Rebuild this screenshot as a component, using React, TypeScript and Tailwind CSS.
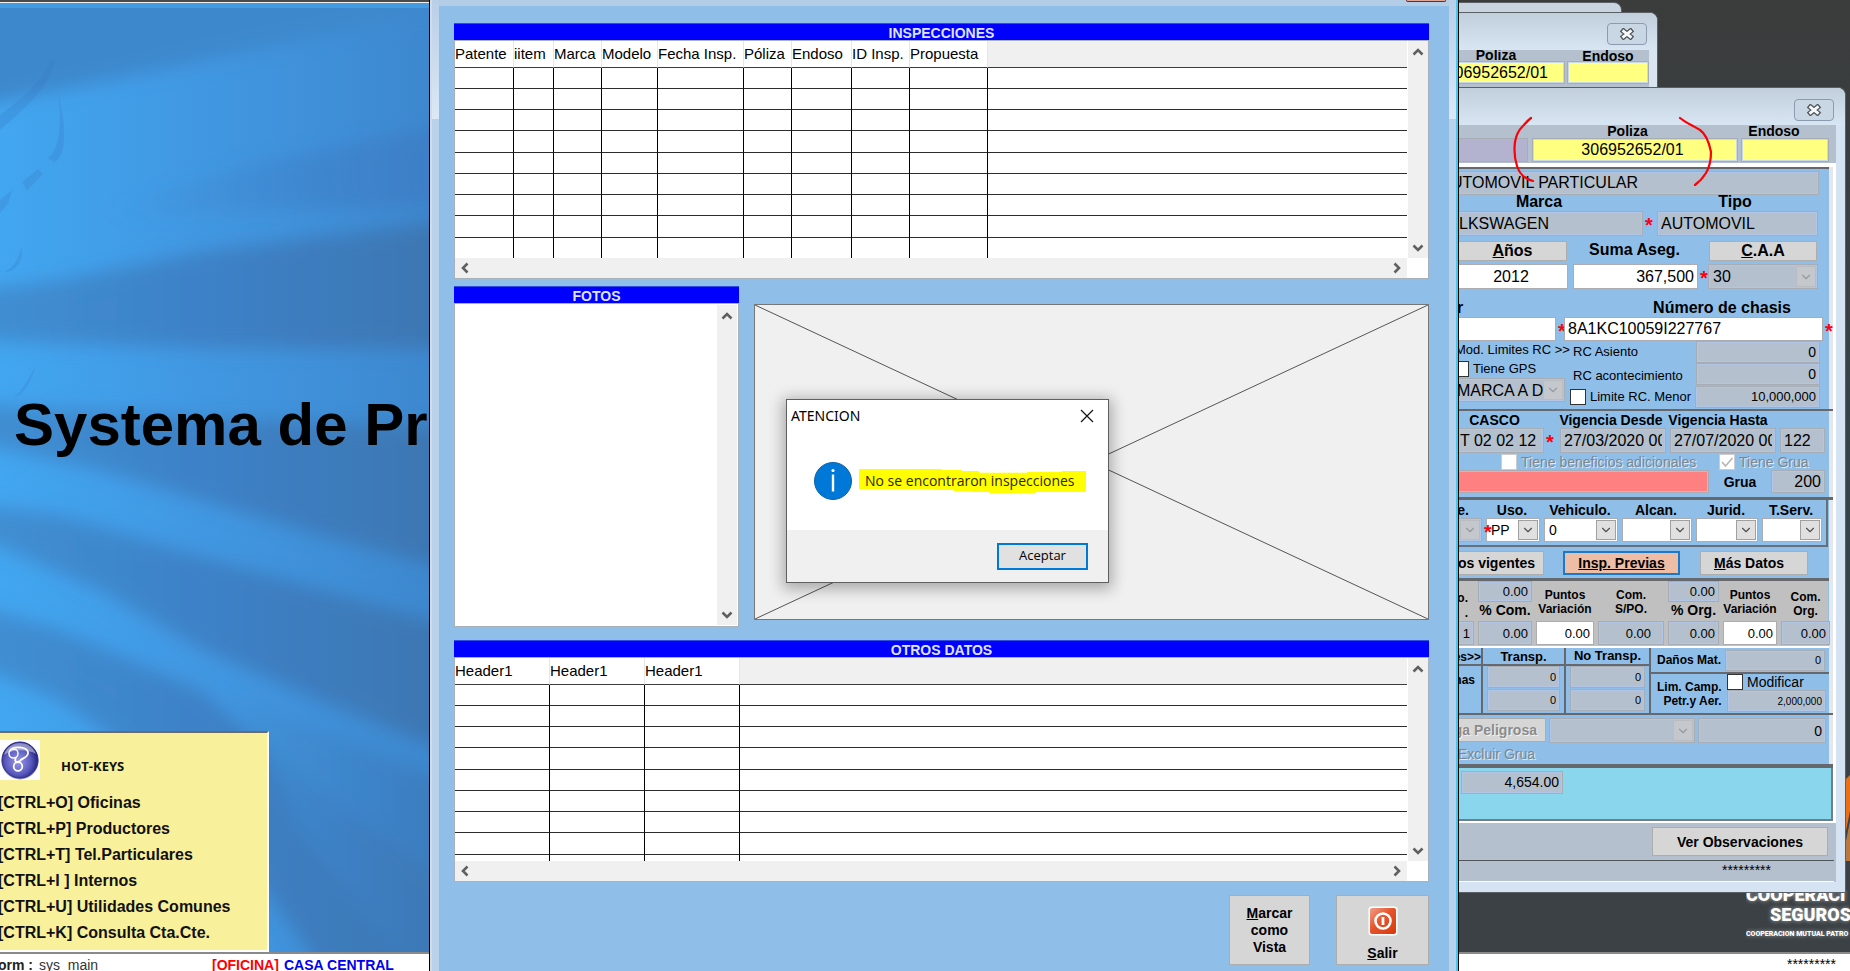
import React from "react";
import { ChevronDown } from "lucide-react";

type Kids = { children?: React.ReactNode };

/* ---------- Shared controls ---------- */

const fieldTones = {
  gray: "border-[#a7adb6] bg-[#b4c0ce] shadow-[inset_0_0_0_1px_#b3c5e4]",
  white: "border-[#abadb3] bg-white",
  yellow: "border-[#a7adb6] bg-[#ffff80] shadow-[inset_0_0_0_1px_#c9d9e8]",
  lilac: "border-[#a7adb6] bg-[#b3b3cf]",
  red: "border-[#a7adb6] bg-[#ff8080] shadow-[inset_0_0_0_1px_#c0b8d8]",
};

function Field({
  label,
  value = "",
  className,
  tone = "gray",
  id,
}: {
  label?: string;
  value?: string;
  className: string;
  tone?: keyof typeof fieldTones;
  id?: string;
}) {
  return (
    <input
      id={id}
      aria-label={label}
      readOnly
      defaultValue={value}
      className={`min-w-0 shrink-0 border px-[3px] outline-none ${fieldTones[tone]} ${className}`}
    />
  );
}

function Combo({
  label,
  value = "",
  className,
  disabled = false,
}: {
  label: string;
  value?: string;
  className: string;
  disabled?: boolean;
}) {
  return (
    <div
      className={`relative flex shrink-0 border ${
        disabled ? "border-[#a7adb6] bg-[#b4c0ce] shadow-[inset_0_0_0_1px_#b3c5e4]" : "border-[#abadb3] bg-white"
      } ${className}`}
    >
      <select
        aria-label={label}
        disabled={disabled}
        defaultValue={value}
        className="h-full w-full appearance-none bg-transparent pl-1 text-black opacity-100 outline-none"
      >
        <option value={value}>{value}</option>
      </select>
      <span
        className={`pointer-events-none absolute inset-y-px right-px flex w-5 items-center justify-center border ${
          disabled
            ? "border-[#b9bdc2] bg-[#c4c8cc] text-[#969a9e]"
            : "border-[#a0a0a0] bg-[#e0e0e0] text-[#505050]"
        }`}
      >
        <ChevronDown size={14} strokeWidth={2} />
      </span>
    </div>
  );
}

function Star({ className = "" }: { className?: string }) {
  return (
    <span className={`w-3 shrink-0 pt-1 text-center text-xl leading-none font-bold text-[#ff0010] ${className}`}>
      *
    </span>
  );
}

function Button({
  children,
  className = "",
  active = false,
  ...rest
}: Kids & { active?: boolean } & React.ButtonHTMLAttributes<HTMLButtonElement>) {
  return (
    <button
      type="button"
      className={`shrink-0 font-bold ${
        active ? "border-2 border-[#1e78c8] bg-[#edbda6]" : "border border-[#adadad] bg-[#d6d6d6]"
      } ${className}`}
      {...rest}
    >
      {children}
    </button>
  );
}

function Check({
  id,
  label,
  className = "",
  faded = false,
  checked = false,
}: {
  id: string;
  label: string;
  className?: string;
  faded?: boolean;
  checked?: boolean;
}) {
  return (
    <span className={`flex shrink-0 items-center gap-1 whitespace-nowrap ${className}`}>
      <span className="relative flex">
        <input
          id={id}
          type="checkbox"
          disabled={faded}
          defaultChecked={checked}
          className={`size-4 appearance-none border bg-white ${faded ? "border-[#cccccc]" : "border-[#333333]"}`}
        />
        {checked && (
          <svg viewBox="0 0 16 16" className="pointer-events-none absolute inset-0 size-4">
            <path d="M3 8l3.5 4L13.5 4" fill="none" stroke="#b8b8b8" strokeWidth="1.8" />
          </svg>
        )}
      </span>
      <label
        htmlFor={id}
        className={faded ? "text-[#7d8790] [text-shadow:1px_1px_0_#ffffffb0]" : "text-black"}
      >
        {label}
      </label>
    </span>
  );
}

function Arrow({ dir }: { dir: "up" | "down" | "left" | "right" }) {
  const d = {
    up: "M1.5 8.5L6 4l4.500 4.500",
    down: "M1.500 3.500L6 8l4.500-4.500",
    left: "M8.500 1.500L4 6l4.500 4.500",
    right: "M3.500 1.500L8 6l-4.500 4.500",
  }[dir];
  return (
    <svg viewBox="0 0 12 12" className="size-3">
      <path d={d} fill="none" stroke="#606060" strokeWidth="2.6" />
    </svg>
  );
}

function VScroll() {
  return (
    <div className="flex w-5 shrink-0 flex-col justify-between bg-[#f0f0f0]">
      <button type="button" aria-label="Subir" className="flex h-[22px] items-center justify-center">
        <Arrow dir="up" />
      </button>
      <button type="button" aria-label="Bajar" className="flex h-5 items-center justify-center">
        <Arrow dir="down" />
      </button>
    </div>
  );
}

function HScroll() {
  return (
    <div className="mr-[21px] flex h-5 justify-between bg-[#f0f0f0]">
      <button type="button" aria-label="Izquierda" className="flex w-5 items-center justify-center">
        <Arrow dir="left" />
      </button>
      <button type="button" aria-label="Derecha" className="flex w-5 items-center justify-center">
        <Arrow dir="right" />
      </button>
    </div>
  );
}

function CloseBox() {
  return (
    <button
      type="button"
      aria-label="Cerrar"
      className="flex h-[22px] w-10 items-center justify-center rounded-sm border border-[#8d9bb0] bg-[#c9d6e4]"
    >
      <svg viewBox="0 0 16 12" className="h-3 w-4">
        <path d="M2.500 1.500l11 9M13.500 1.500l-11 9" stroke="#50555c" strokeWidth="5.400" />
        <path d="M3.500 2.300l9 7.400M12.500 2.300l-9 7.400" stroke="#f6f8fa" strokeWidth="2.800" />
      </svg>
    </button>
  );
}

/* ---------- Main window ---------- */

function Caption({ children }: Kids) {
  return (
    <h2 className="h-[17px] border-t border-[#2d4fe0] bg-[#0000ff] text-center text-sm leading-[18px] font-bold text-[#dfe3ff]">
      {children}
    </h2>
  );
}

function Grid({
  columns,
  rows,
  lastRow,
}: {
  columns: { name: string; width: string }[];
  rows: number;
  lastRow: string;
}) {
  return (
    <div className="border border-[#a9b2ba] bg-white">
      <div className="flex">
        <table className="min-w-0 flex-1 table-fixed border-separate border-spacing-0 text-[15px]">
          <thead>
            <tr className="h-[27px]">
              {columns.map((c, i) => (
                <th
                  key={i}
                  className={`border-r border-b border-r-[#e6e6e6] border-b-[#3c3c3c] p-0 text-left font-normal whitespace-nowrap ${c.width}`}
                >
                  {c.name}
                </th>
              ))}
              <th className="border-b border-b-[#3c3c3c] bg-[#f0f0f0] p-0" />
            </tr>
          </thead>
          <tbody>
            {Array.from({ length: rows }, (_, r) => (
              <tr key={r} className={r === rows - 1 ? lastRow : r % 4 === 3 ? "h-[22px]" : "h-[21px]"}>
                {columns.map((_, i) => (
                  <td
                    key={i}
                    className={`border-r border-black p-0 ${r === rows - 1 ? "" : "border-b border-b-[#2c2c2c]"}`}
                  />
                ))}
                <td className={`p-0 ${r === rows - 1 ? "" : "border-b border-b-[#2c2c2c]"}`} />
              </tr>
            ))}
          </tbody>
        </table>
        <span className="w-px" />
        <VScroll />
      </div>
      <HScroll />
    </div>
  );
}

const inspectionColumns = [
  { name: "Patente", width: "w-[59px]" },
  { name: "iitem", width: "w-[40px]" },
  { name: "Marca", width: "w-[48px]" },
  { name: "Modelo", width: "w-[56px]" },
  { name: "Fecha Insp.", width: "w-[86px]" },
  { name: "Póliza", width: "w-[48px]" },
  { name: "Endoso", width: "w-[60px]" },
  { name: "ID Insp.", width: "w-[58px]" },
  { name: "Propuesta", width: "w-[78px]" },
];

const otherColumns = [
  { name: "Header1", width: "w-[95px]" },
  { name: "Header1", width: "w-[95px]" },
  { name: "Header1", width: "w-[95px]" },
];

function PowerIcon() {
  return (
    <svg viewBox="0 0 30 30" className="size-[30px]">
      <defs>
        <linearGradient id="power" x1="0" y1="0" x2="1" y2="1">
          <stop offset="0" stopColor="#f0a08a" />
          <stop offset="0.45" stopColor="#e5532c" />
          <stop offset="1" stopColor="#d83a08" />
        </linearGradient>
      </defs>
      <rect x="0.500" y="0.500" width="29" height="29" rx="3" fill="#fff" />
      <rect x="2" y="2" width="26" height="26" rx="2" fill="url(#power)" />
      <circle cx="15" cy="15" r="7.500" fill="none" stroke="#fff" strokeWidth="2.600" />
      <path d="M15 11v8" stroke="#fff" strokeWidth="2.800" />
    </svg>
  );
}

function InspectionsWindow() {
  return (
    <main className="absolute inset-y-0 right-[391px] left-[429px] flex border-r border-l border-black bg-[#bad1ea]">
      <div className="w-[9px] shrink-0 border-l-2 border-[#d5dbe1] bg-linear-to-b from-[#b9cfe8] to-[#dce8f5] bg-[length:100%_119px] bg-no-repeat" />
      <div className="flex min-w-0 flex-1 flex-col">
        <div className="flex h-1.5 justify-end bg-[#b4cde6] pr-[3px]">
          <span className="h-0.5 w-10 rounded-b-sm border border-t-0 border-[#6b2a2a] bg-[#dfa79b]" />
        </div>
        <div className="flex flex-1 flex-col bg-[#8fbfe9] pt-[17px] pr-5 pl-[15px]">
          <section>
            <Caption>INSPECCIONES</Caption>
            <Grid columns={inspectionColumns} rows={9} lastRow="h-[20px]" />
          </section>

          <div className="mt-[7px] flex gap-[15px]">
            <section className="w-[285px] shrink-0">
              <Caption>FOTOS</Caption>
              <div className="flex h-[324px] justify-end border border-[#a9b2ba] bg-white p-px">
                <VScroll />
              </div>
            </section>
            <div className="mt-[18px] mb-[7px] min-w-0 flex-1 border border-[#777] bg-[#f0f0f0]">
              <svg viewBox="0 0 100 100" preserveAspectRatio="none" className="h-full max-h-[314px] w-full">
                <path
                  d="M0 0L100 100M100 0L0 100"
                  stroke="#555"
                  strokeWidth="1"
                  vectorEffect="non-scaling-stroke"
                />
              </svg>
            </div>
          </div>

          <section className="mt-[13px]">
            <Caption>OTROS DATOS</Caption>
            <Grid columns={otherColumns} rows={9} lastRow="h-[6px]" />
          </section>

          <div className="mt-[13px] flex justify-end gap-[26px] text-sm">
            <Button className="h-[70px] w-[81px] px-3 leading-[17px]">
              <span className="underline">M</span>arcar como Vista
            </Button>
            <Button className="flex h-[70px] w-[93px] flex-col items-center justify-between pt-2.5 pb-0.5 leading-[18px]">
              <PowerIcon />
              <span>
                <span className="underline">S</span>alir
              </span>
            </Button>
          </div>
        </div>
      </div>
      <div className="w-[9px] shrink-0 border-r-2 border-[#47c8ea] bg-linear-to-b from-[#b9cfe8] to-[#dce8f5] bg-[length:100%_119px] bg-no-repeat" />
    </main>
  );
}

/* ---------- Message box ---------- */

function MessageBox() {
  return (
    <div
      role="dialog"
      aria-labelledby="msg-title"
      className="absolute top-[399px] left-[786px] w-[323px] border border-[#5f5f5f] bg-white font-['Open_Sans',sans-serif] shadow-[0_3px_14px_3px_rgba(0,0,0,0.3)]"
    >
      <div className="flex h-8 items-center justify-between pr-3.5 pl-1">
        <h2 id="msg-title" className="font-['Noto_Sans',sans-serif] text-sm">
          ATENCION
        </h2>
        <button type="button" aria-label="Cerrar" className="flex">
          <svg viewBox="0 0 14 14" className="size-3.5">
            <path d="M1 1l12 12M13 1L1 13" stroke="#111" strokeWidth="1.200" />
          </svg>
        </button>
      </div>
      <div className="flex h-[98px] items-center pl-[27px]">
        <svg viewBox="0 0 38 38" className="size-[38px]">
          <circle cx="19" cy="19" r="18.500" fill="#0078d7" stroke="#0c62a8" />
          <circle cx="19" cy="8.500" r="1.600" fill="#fff" />
          <path d="M19 12.500v17" stroke="#fff" strokeWidth="2.400" />
        </svg>
        <div className="relative ml-[7px] flex h-6 w-[227px] items-center pl-1.5">
          <svg viewBox="0 0 227 25" preserveAspectRatio="none" className="absolute inset-0 size-full">
            <path
              d="M0 0H83V1H103V2H120V4H168V3H203V2H227V24H177V25H130V24H112V23H95V22H75V21H0Z"
              fill="#ffff00"
            />
          </svg>
          <p className="relative text-sm leading-[22px] whitespace-nowrap text-[#2d2600]">
            No se encontraron inspecciones
          </p>
        </div>
      </div>
      <div className="flex h-[52px] items-center justify-end bg-[#f0f0f0] pr-5">
        <button type="button" className="h-[27px] w-[91px] border-2 border-[#0078d7] bg-[#e1e1e1] text-[13px]">
          Aceptar
        </button>
      </div>
    </div>
  );
}

/* ---------- Policy windows ---------- */

function HeaderLabel({ children, className }: Kids & { className: string }) {
  return <span className={`shrink-0 text-center text-sm leading-3 font-bold ${className}`}>{children}</span>;
}

function BackWindows() {
  return (
    <>
      <div className="absolute top-[2px] right-[228px] h-16 w-[182px] rounded-tr-lg border border-[#5a6066] bg-[#c8d4e0]" />
      <section className="absolute top-[12px] right-[192px] w-[218px] rounded-tr-lg border border-[#5a6066] bg-[#d8e4f0]">
        <div className="flex h-[37px] justify-end rounded-tr-lg bg-linear-to-b from-[#c1cedb] to-[#d8e5f2] pt-2.5 pr-2.5">
          <CloseBox />
        </div>
        <div className="mr-2 flex h-[52px] flex-col bg-[#b4c0ce]">
          <div className="flex h-[11px] overflow-hidden leading-[10px]">
            <HeaderLabel className="-mt-px w-[110px]">Poliza</HeaderLabel>
            <HeaderLabel className="ml-4 w-[82px]">Endoso</HeaderLabel>
          </div>
          <div className="flex gap-0.5">
            <Field
              label="Poliza anterior"
              tone="yellow"
              value="306952652/01"
              className="h-[23px] w-[124px] pr-4 text-right text-base"
            />
            <Field label="Endoso anterior" tone="yellow" className="h-[23px] w-[82px]" />
          </div>
        </div>
      </section>
    </>
  );
}

function Bar({ className }: { className: string }) {
  return <div className={`bg-[#65696d] ${className}`} />;
}

function Heading({ children, className }: Kids & { className: string }) {
  return <span className={`shrink-0 text-center font-bold whitespace-nowrap ${className}`}>{children}</span>;
}

function PolicyWindow() {
  return (
    <section className="absolute top-[87px] right-[4px] w-[406px] rounded-tr-lg border border-l-0 border-[#5a6066] bg-[#d5e3f2] text-black">
      <div className="flex h-[37px] justify-end rounded-tr-lg bg-linear-to-b from-[#c1cedb] to-[#d8e5f2] pt-[11px] pr-[11px]">
        <CloseBox />
      </div>

      <div className="mr-[9px] mb-2.5 bg-[#b4c0ce]">
        <div className="flex h-[13px]">
          <HeaderLabel className="ml-[93px] w-[189px]">Poliza</HeaderLabel>
          <HeaderLabel className="ml-[19px] w-[66px]">Endoso</HeaderLabel>
        </div>
        <div className="flex h-[25px] text-base">
          <Field label="Certificado" tone="lilac" className="h-6 w-[88px]" />
          <Field
            label="Poliza"
            tone="yellow"
            value="306952652/01"
            className="ml-1 h-6 w-[206px] pr-2 text-center"
          />
          <Field label="Endoso" tone="yellow" className="ml-[3px] h-6 w-[88px]" />
        </div>
        <div className="h-1 bg-white" />

        <div className="border-r-[3px] border-white bg-[#e4e8ec]">
          <Bar className="mr-1 h-0.5" />
          <div className="mr-1 bg-[#8fbfe9]">
            <div className="flex h-[26px] pt-0.5 text-base">
              <Field label="Vehiculo" value="UTOMOVIL PARTICULAR" className="h-6 w-[379px] pl-[10px]" />
            </div>
            <div className="flex h-4 text-base leading-[14px]">
              <Heading className="w-[198px]">Marca</Heading>
              <Heading className="ml-[47px] w-[100px]">Tipo</Heading>
            </div>
            <div className="flex h-[25px] text-base">
              <Field label="Marca" value="LKSWAGEN" className="h-[25px] w-[203px] pl-[18px]" />
              <Star />
              <Field label="Tipo" value="AUTOMOVIL" className="ml-0.5 h-[25px] w-[161px]" />
            </div>
            <div className="mt-[5px] flex h-5 text-base leading-[18px]">
              <Button className="ml-[18px] h-5 w-[109px]">
                <span className="underline">A</span>ños
              </Button>
              <Heading className="w-[135px]">Suma Aseg.</Heading>
              <Button className="ml-[7px] h-5 w-[108px]">
                <span className="underline">C</span>.A.A
              </Button>
            </div>
            <div className="mt-[3px] flex h-[25px] text-base">
              <Field tone="white" label="Años" value="2012" className="ml-[14px] h-[25px] w-[114px] text-center" />
              <Field
                tone="white"
                label="Suma asegurada"
                value="367,500"
                className="ml-[5px] h-[25px] w-[125px] text-right"
              />
              <Star className="-mr-1" />
              <Combo disabled label="C.A.A" value="30" className="ml-0.5 h-[25px] w-[110px]" />
            </div>
            <div className="mt-2.5 flex h-[18px] text-base leading-[18px]">
              <Heading className="ml-[16px] w-2">r</Heading>
              <Heading className="ml-[187px] w-[142px]">Número de chasis</Heading>
            </div>
            <div className="flex h-6 text-base">
              <Field tone="white" label="Motor" className="h-6 w-[116px]" />
              <Star className="-mr-1" />
              <Field tone="white" label="Número de chasis" value="8A1KC10059I227767" className="h-6 w-[259px]" />
              <Star className="-mr-3" />
            </div>

            <div className="flex h-[67px] text-[13px]">
              <div className="w-[130px] shrink-0">
                <div className="h-5 pl-[15px] leading-[17px] whitespace-nowrap">Mod. Limites RC &gt;&gt;</div>
                <Check id="gps" label="Tiene GPS" className="h-4 pl-[13px]" />
                <Combo
                  disabled
                  label="Marca"
                  value="MARCA A D"
                  className="mt-px h-6 w-[125px] pl-3 text-base"
                />
              </div>
              <div className="flex flex-1 flex-col">
                <div className="flex h-[22px] items-center justify-between pl-[3px]">
                  <label htmlFor="rc-asiento">RC Asiento</label>
                  <Field id="rc-asiento" value="0" className="mr-[9px] h-[22px] w-[124px] text-right text-sm" />
                </div>
                <div className="flex h-[22px] items-center justify-between pl-[3px]">
                  <label htmlFor="rc-acont" className="pt-1">
                    RC acontecimiento
                  </label>
                  <Field id="rc-acont" value="0" className="mr-[9px] h-[22px] w-[124px] text-right text-sm" />
                </div>
                <div className="flex h-[23px] items-center justify-between">
                  <Check id="rc-menor" label="Limite RC. Menor" />
                  <Field label="Monto RC" value="10,000,000" className="mr-[9px] h-[22px] w-[125px] text-right" />
                </div>
              </div>
            </div>
            <Bar className="-mr-1 mt-px h-0.5" />

            <div className="flex h-[17px] text-sm leading-[18px]">
              <Heading className="w-[109px]">CASCO</Heading>
              <Heading className="ml-[9px] w-[106px]">Vigencia Desde</Heading>
              <Heading className="ml-1 w-[100px]">Vigencia Hasta</Heading>
            </div>
            <div className="flex h-[25px] text-base">
              <Field label="Casco" value="T 02 02 12" className="h-[25px] w-[104px] pl-[19px]" />
              <Star />
              <Field label="Vigencia Desde" value="27/03/2020 00:00" className="ml-1 h-[25px] w-[106px]" />
              <Field label="Vigencia Hasta" value="27/07/2020 00:00" className="ml-1 h-[25px] w-[106px]" />
              <Field label="Dias" value="122" className="ml-1 h-[25px] w-[45px]" />
            </div>
            <div className="flex h-[17px] items-center text-sm">
              <Check id="benef" faded label="Tiene beneficios adicionales" className="ml-[61px] w-[218px]" />
              <Check id="grua-chk" faded checked label="Tiene Grua" />
            </div>
            <div className="flex h-[23px] text-base">
              <Field label="Aviso" tone="red" className="h-[23px] w-[269px]" />
              <label htmlFor="grua" className="w-[62px] text-center text-sm leading-[25px] font-bold">
                Grua
              </label>
              <Field id="grua" value="200" className="h-[23px] w-[54px] text-right" />
            </div>
            <Bar className="-mr-1 mt-1 h-[3px]" />

            <div className="mr-px h-[47px] border-r-2 border-b-2 border-[#65707c]">
              <div className="flex h-[18px] text-sm leading-[20px]">
                <Heading className="ml-[17px] w-3">e.</Heading>
                <Heading className="ml-[16px] w-[54px]">Uso.</Heading>
                <Heading className="ml-1 w-[74px]">Vehiculo.</Heading>
                <Heading className="ml-1 w-[70px]">Alcan.</Heading>
                <Heading className="ml-1 w-[62px]">Jurid.</Heading>
                <Heading className="ml-1 w-[60px]">T.Serv.</Heading>
              </div>
              <div className="flex h-6 gap-1 text-sm">
                <Combo disabled label="Clase" className="h-6 w-[42px]" />
                <div className="relative">
                  <Combo label="Uso" value="PP" className="h-6 w-[54px]" />
                  <Star className="absolute top-0 -left-1" />
                </div>
                <Combo label="Vehiculo" value="0" className="h-6 w-[74px]" />
                <Combo label="Alcance" className="h-6 w-[70px]" />
                <Combo label="Jurid." className="h-6 w-[62px]" />
                <Combo label="T.Serv." className="h-6 w-[60px]" />
              </div>
            </div>

            <div className="mt-1 flex h-6 text-sm">
              <Button className="h-6 w-[104px] pr-2 text-right">os vigentes</Button>
              <Button active className="ml-[19px] h-6 w-[117px] underline">
                Insp. Previas
              </Button>
              <Button className="ml-5 h-6 w-[108px] pr-2.5">
                <span className="underline">M</span>ás Datos
              </Button>
            </div>
            <Bar className="mt-[3px] h-[3px]" />

            <div className="mr-px flex h-[65px] gap-1 bg-[#c0c0c0] text-[13px]">
              <div className="flex w-[34px] shrink-0 flex-col">
                <span className="flex h-10 flex-col items-end justify-end pr-1.5 text-xs leading-[15px] font-bold">
                  <span>o.</span>
                  <span>.</span>
                </span>
                <Field label="Cuotas" value="1" className="h-6 w-[34px] text-right" />
              </div>
              <div className="flex w-[54px] shrink-0 flex-col">
                <Field label="Comision" value="0.00" className="h-[21px] w-[54px] text-right" />
                <span className="h-[19px] text-center text-sm leading-[16px] font-bold">% Com.</span>
                <Field label="% Com." value="0.00" className="h-6 w-[54px] text-right" />
              </div>
              <div className="flex w-[58px] shrink-0 flex-col">
                <span className="h-10 pt-[7px] text-center text-xs leading-[14px] font-bold">Puntos Variación</span>
                <Field tone="white" label="Variación com." value="0.00" className="h-6 w-[58px] text-right" />
              </div>
              <div className="flex w-[66px] shrink-0 flex-col">
                <span className="h-10 px-3 pt-[7px] text-center text-xs leading-[14px] font-bold">Com. S/PO.</span>
                <Field label="Com. S/PO." value="0.00" className="h-6 w-[66px] pr-3 text-right" />
              </div>
              <div className="flex w-[51px] shrink-0 flex-col">
                <Field label="Organizador" value="0.00" className="h-[21px] w-[51px] text-right" />
                <span className="h-[19px] text-center text-sm leading-[16px] font-bold">% Org.</span>
                <Field label="% Org." value="0.00" className="h-6 w-[51px] text-right" />
              </div>
              <div className="flex w-[54px] shrink-0 flex-col">
                <span className="h-10 pt-[7px] text-center text-xs leading-[14px] font-bold">Puntos Variación</span>
                <Field tone="white" label="Variación org." value="0.00" className="h-6 w-[54px] text-right" />
              </div>
              <div className="flex w-[49px] shrink-0 flex-col">
                <span className="h-10 px-2 pt-[9px] text-center text-xs leading-[14px] font-bold">Com. Org.</span>
                <Field label="Com. Org." value="0.00" className="h-6 w-[49px] text-right" />
              </div>
            </div>
            <div className="h-0.5 bg-white" />

            <div className="flex h-[65px] text-xs font-bold">
              <div className="flex w-[43px] shrink-0 flex-col border-r-2 border-[#65696d]">
                <span className="h-[16px] text-right leading-[18px]">es&gt;&gt;</span>
                <Bar className="h-0.5" />
                <span className="pr-1.5 text-right leading-[28px]">nas</span>
              </div>
              <div className="flex w-[83px] shrink-0 flex-col border-r-2 border-[#65696d]">
                <span className="h-[16px] text-center text-[13px] leading-[18px]">Transp.</span>
                <Bar className="h-0.5" />
                <div className="flex flex-col gap-px px-1 text-[11px] font-normal">
                  <Field label="Transp. 1" value="0" className="h-[22px] w-full text-right" />
                  <Field label="Transp. 2" value="0" className="h-[22px] w-full text-right" />
                </div>
              </div>
              <div className="flex w-[85px] shrink-0 flex-col border-r-2 border-[#65696d]">
                <span className="h-[16px] text-center text-[13px] leading-[16px]">No Transp.</span>
                <Bar className="h-0.5" />
                <div className="flex flex-col gap-px px-1 text-[11px] font-normal">
                  <Field label="No Transp. 1" value="0" className="h-[22px] w-full text-right" />
                  <Field label="No Transp. 2" value="0" className="h-[22px] w-full text-right" />
                </div>
              </div>
              <div className="flex min-w-0 flex-1 flex-col">
                <div className="flex h-6 items-center justify-between pr-1 pl-1.5">
                  <label htmlFor="danos">Daños Mat.</label>
                  <Field id="danos" value="0" className="h-[21px] w-[100px] text-right text-[11px] font-normal" />
                </div>
                <Bar className="h-0.5" />
                <div className="flex justify-between pr-[3px] pl-1.5">
                  <label htmlFor="lim" className="pt-1.5 text-right leading-[14px] whitespace-nowrap">
                    Lim. Camp.
                    <br />
                    Petr.y Aer.
                  </label>
                  <div className="flex flex-col">
                    <Check id="modif" label="Modificar" className="h-4 text-sm font-normal" />
                    <Field id="lim" value="2,000,000" className="h-[22px] w-[99px] text-right text-[10px] font-normal" />
                  </div>
                </div>
              </div>
            </div>
            <Bar className="-mr-1 h-0.5" />

            <div className="mt-[3px] flex h-[25px] text-sm">
              <Button
                disabled
                className="h-6 w-[106px] pr-2 text-right text-[#8b8b8b] [text-shadow:1px_1px_0_#ffffffb0]"
              >
                ga Peligrosa
              </Button>
              <Combo disabled label="Carga" className="ml-[3px] h-[25px] w-[146px]" />
              <Field label="Valor carga" value="0" className="ml-[3px] h-[25px] w-[128px] text-right" />
            </div>
            <div className="h-[21px] pl-[18px] text-sm leading-[22px] text-[#7d8790] [text-shadow:1px_1px_0_#ffffffb0]">
              Excluir Grua
            </div>
            <Bar className="-mr-1 h-1" />
            <div className="-mr-1 h-[53px] border-r-2 border-b-2 border-[#6d7f8a] bg-[#8ad6ed] pt-0.5 pl-[21px]">
              <Field label="Premio" value="4,654.00" className="h-[23px] w-[102px] text-right text-sm" />
            </div>
          </div>
        </div>
        <div className="h-0.5 bg-white" />
        <div className="flex h-[37px] items-center justify-end pr-2">
          <Button className="h-[29px] w-[176px] text-sm">Ver Observaciones</Button>
        </div>
        <div className="mr-0.5 h-[22px] border-t border-b border-t-[#50565c] border-b-white pr-[63px] text-right text-sm leading-[18px]">
          *********
        </div>
      </div>

      <svg viewBox="0 0 200 70" className="pointer-events-none absolute top-[28px] left-[73px] h-[70px] w-[200px]">
        <path
          d="M18 2C14 5 12 8 9 11C5 15 3 20 2 26C1 34 1 41 4 50C6 57 12 63 20 65"
          fill="none"
          stroke="#fb0007"
          strokeWidth="2.200"
          strokeLinecap="round"
        />
        <path
          d="M167 2C173 7 181 10 187 14C193 18 196 26 198 36C198 44 196 52 193 57C190 62 186 66 182 69"
          fill="none"
          stroke="#fb0007"
          strokeWidth="2.200"
          strokeLinecap="round"
        />
      </svg>
    </section>
  );
}

/* ---------- Desktop ---------- */

function Wallpaper() {
  return (
    <svg
      viewBox="0 0 430 952"
      preserveAspectRatio="none"
      className="absolute top-0 left-0 h-[952px] w-[430px]"
      aria-hidden="true"
    >
      <defs>
        <linearGradient id="sky" x1="0" y1="0" x2="1" y2="0">
          <stop offset="0" stopColor="#42a6f0" />
          <stop offset="0.450" stopColor="#4198e2" />
          <stop offset="1" stopColor="#3d88cf" />
        </linearGradient>
        <linearGradient id="shade" x1="0" y1="0" x2="1" y2="0">
          <stop offset="0" stopColor="#3f90d4" />
          <stop offset="0.450" stopColor="#3e82c8" />
          <stop offset="1" stopColor="#3b75b0" />
        </linearGradient>
        <linearGradient id="haze" x1="0" y1="0" x2="1" y2="0">
          <stop offset="0" stopColor="#3d86cb" stopOpacity="0" />
          <stop offset="1" stopColor="#3d7dc6" />
        </linearGradient>
        <filter id="soft" x="-20%" y="-20%" width="140%" height="140%">
          <feGaussianBlur stdDeviation="9" />
        </filter>
      </defs>
      <rect width="430" height="952" fill="url(#sky)" />
      <g filter="url(#soft)">
        <path d="M-40 -30H470V5L300 40L160 70L-40 110Z" fill="#3e88cd" />
        <path d="M470 120L250 165L100 215L470 205Z" fill="url(#haze)" />
        <path d="M-40 292L60 280L200 252L470 218V348H200L-40 340Z" fill="url(#shade)" />
        <path d="M-40 402L200 418L470 428V575L320 535L200 500L100 470L-40 440Z" fill="url(#shade)" />
        <path d="M-40 502L60 515L200 556L470 632V760L320 700L200 648L100 590L-40 530Z" fill="url(#shade)" />
        <path d="M-40 600L60 630L200 690L280 760L470 900V980H330L200 800L60 700L-40 660Z" fill="url(#shade)" />
        <path d="M240 700L470 790V960H400L300 830Z" fill="url(#shade)" opacity="0.700" />
      </g>
      <g fill="#3878c4" opacity="0.250">
        <path d="M55 60C50 85 30 105 0 130V115C28 95 46 75 50 60Z" />
        <path d="M58 92C66 125 68 155 54 163L48 158C60 150 62 120 58 92Z" />
        <path d="M22 182L38 169L43 174L27 191Z" />
        <path d="M0 200L12 190L8 204L0 213Z" />
        <path d="M21 246C25 260 16 272 5 272C14 266 20 258 21 246Z" />
        <path d="M35 367C32 380 26 392 14 398C24 388 30 376 35 367Z" />
      </g>
      <rect width="430" height="2" fill="#4a4a4a" />
      <rect y="2" width="430" height="1" fill="#f0f0f0" />
      <rect y="3" width="430" height="5" fill="#48a8f0" opacity="0.600" />
    </svg>
  );
}

const hotKeys = [
  "[CTRL+O] Oficinas",
  "[CTRL+P] Productores",
  "[CTRL+T] Tel.Particulares",
  "[CTRL+I ] Internos",
  "[CTRL+U] Utilidades Comunes",
  "[CTRL+K] Consulta Cta.Cte.",
];

function HotKeys() {
  return (
    <aside className="absolute bottom-[19px] left-0 h-[221px] w-[269px] border-t-2 border-r-2 border-b-2 border-t-[#6b6b6b] border-r-white border-b-white bg-[#f9f09c] pt-[7px]">
      <div className="flex gap-[21px]">
        <svg viewBox="0 0 40 40" className="size-10">
          <defs>
            <radialGradient id="orb" cx="0.450" cy="0.550" r="0.600">
              <stop offset="0" stopColor="#9a9ae8" />
              <stop offset="0.600" stopColor="#5a5abf" />
              <stop offset="1" stopColor="#14146e" />
            </radialGradient>
          </defs>
          <rect width="40" height="40" fill="#fff" />
          <circle cx="20" cy="21" r="18.500" fill="#9b9bc0" />
          <circle cx="20" cy="20" r="18" fill="url(#orb)" stroke="#30308a" />
          <path d="M4 15C7 6 14 3 20 3S33 6 36 14C28 9 12 9 4 15Z" fill="#fff" opacity="0.450" />
          <circle cx="13.500" cy="13.500" r="4.500" fill="none" stroke="#fff" strokeWidth="1.500" />
          <path
            d="M10 11C12 6 26 6 28 12C29 18 21 18 20 21C16 23 14 21 16 18"
            fill="none"
            stroke="#fff"
            strokeWidth="1.800"
          />
          <circle cx="18" cy="26.500" r="4.300" fill="none" stroke="#fff" strokeWidth="1.800" />
        </svg>
        <h2 className="pt-[17px] font-['Open_Sans',sans-serif] text-[13px] leading-[18px] font-bold text-[#111]">
          HOT-KEYS
        </h2>
      </div>
      <ul className="mt-2.5 -ml-0.5 text-base leading-[26px] font-bold text-[#111]">
        {hotKeys.map((k) => (
          <li key={k} className="whitespace-nowrap">
            {k}
          </li>
        ))}
      </ul>
    </aside>
  );
}

export default function App() {
  return (
    <div className="relative flex min-h-screen flex-col overflow-hidden bg-[#3c3f3f] font-['Liberation_Sans',Arial,sans-serif]">
      <div className="absolute inset-y-0 right-0 w-[420px] bg-linear-to-b from-[#3b3c3c] via-[#36434a] to-[#3c4144]" />
      <Wallpaper />
      <h1 className="absolute top-[390px] left-[14px] text-[60px] leading-[70px] font-bold whitespace-nowrap text-black">
        Systema de Pr
      </h1>
      <HotKeys />

      <svg viewBox="0 0 6 90" className="absolute right-0 bottom-[110px] h-[90px] w-1.5" aria-hidden="true">
        <path d="M2 8L6 4V40L2 60Z" fill="#e8701a" />
        <path d="M2 70L6 50V90H2Z" fill="#b87840" />
      </svg>
      <div className="absolute right-0 bottom-[19px] flex h-[62px] w-[104px] flex-col items-start overflow-hidden font-['Roboto',sans-serif] font-black whitespace-nowrap text-white [text-shadow:0_0_4px_#ffffff90]">
        <span className="-mt-1 text-lg leading-[18px]">COOPERACI</span>
        <span className="ml-6 text-lg leading-[22px]">SEGUROS</span>
        <span className="text-[7px] leading-[16px]">COOPERACION MUTUAL PATRO</span>
      </div>

      <footer className="absolute inset-x-0 bottom-0 flex h-[19px] border-t-2 border-[#8a8a8a] bg-white text-sm leading-[22px] font-bold">
        <span className="-ml-0.5 w-[41px] shrink-0 text-[#222]">orm :</span>
        <span className="w-[173px] shrink-0 font-normal text-[#333]">sys_main</span>
        <span className="w-[72px] shrink-0 text-[#ff0000]">[OFICINA]</span>
        <span className="flex-1 text-[#0000f0]">CASA CENTRAL</span>
        <span className="pr-3.5 leading-[20px] font-normal">*********</span>
      </footer>

      <BackWindows />
      <PolicyWindow />
      <InspectionsWindow />
      <MessageBox />
    </div>
  );
}
